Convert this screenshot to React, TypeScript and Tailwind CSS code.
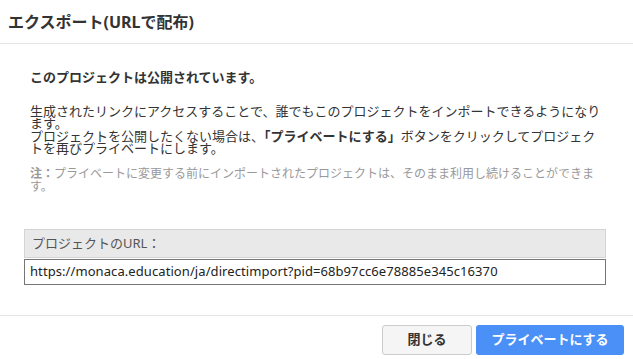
import React from "react";

const jp = '"Noto Sans", "Noto Sans CJK JP", sans-serif';

export default function App() {
  return (
    <div
      className="w-[633px] h-[359px] bg-white flex flex-col text-[#333] overflow-hidden"
      style={{ fontFamily: jp }}
    >
      <div className="h-[44px] shrink-0 flex items-center px-[8px] border-b border-[#e5e5e5]">
        <h1 className="text-[16px] font-bold leading-none text-[#333]">
          エクスポート(URLで配布)
        </h1>
      </div>

      <div className="px-[30px] pt-[27px]">
        <p className="text-[13px] leading-[13px] font-bold text-[#333]">
          このプロジェクトは公開されています。
        </p>
        <p className="mt-[21px] text-[13px] leading-[12.25px] text-[#333]">
          生成されたリンクにアクセスすることで、誰でもこのプロジェクトをインポートできるようになります。
          <br />
          プロジェクトを公開したくない場合は、
          <span className="font-bold">「プライベートにする」</span>
          ボタンをクリックしてプロジェクトを再びプライベートにします。
        </p>
        <p className="mt-[12.5px] text-[12px] leading-[13px] text-[#999]">
          <span className="font-bold">注：</span>
          プライベートに変更する前にインポートされたプロジェクトは、そのまま利用し続けることができます。
        </p>
      </div>

      <div className="ml-[24px] mr-[27px] mt-[36.5px] flex flex-col gap-[1px]">
        <div className="h-[29px] bg-[#e9e9e9] border border-[#d4d4d4] flex items-center pl-[7px] text-[13px] text-[#555]">
          プロジェクトのURL：
        </div>
        <div className="h-[26px] border border-[#767676] flex items-center pl-[5px] text-[13px] tracking-[0.08px] text-[#222]">
          https://monaca.education/ja/directimport?pid=68b97cc6e78885e345c16370
        </div>
      </div>

      <div className="mt-auto h-[44px] shrink-0 border-t border-[#e5e5e5] flex justify-end items-start pt-[9px] pr-[9px] gap-[4px]">
        <button className="w-[90px] h-[30px] rounded-[3px] bg-[#f5f5f5] border border-[#cccccc] text-[13px] font-bold text-[#333]">
          閉じる
        </button>
        <button className="w-[148px] h-[30px] rounded-[3px] bg-[#4a90f7] text-[13px] font-bold text-white">
          プライベートにする
        </button>
      </div>
    </div>
  );
}
